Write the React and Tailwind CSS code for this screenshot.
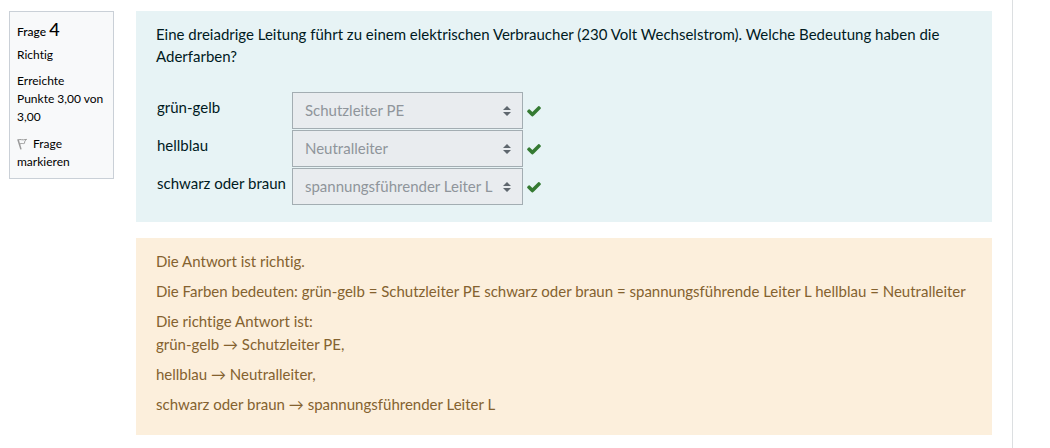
import { useState } from "react"

const rows = [
    { id: "gruen-gelb", label: "grün-gelb", answer: "Schutzleiter PE" },
    { id: "hellblau", label: "hellblau", answer: "Neutralleiter" },
    { id: "schwarz-braun", label: "schwarz oder braun", answer: "spannungsführender Leiter L" },
]

function CheckIcon() {
    return (
        <svg viewBox="0 0 1792 1792" className="h-4 w-4 fill-[#357a32]" role="img" aria-label="Richtig">
            <path d="M1671 566q0 40-28 68l-724 724-136 136q-28 28-68 28t-68-28l-136-136-362-362q-28-28-28-68t28-68l136-136q28-28 68-28t68 28l294 295 656-657q28-28 68-28t68 28l136 136q28 28 28 68z" />
        </svg>
    )
}

function FlagIcon() {
    return (
        <svg viewBox="0 0 12 12" className="mr-px inline-block h-3 w-3 align-[-2px]" fill="none" stroke="#999" aria-hidden="true">
            <path d="M0.9 1.2L4 11.4" strokeWidth="1.5" />
            <path d="M1.5 1.9C3.5 0.8 5 2.6 9.6 1.4C8.2 2.8 7.2 3.6 7.6 5.2C6 6.2 5 4.8 2.8 6" strokeWidth="1" />
        </svg>
    )
}

function AnswerRow({ row }) {
    return (
        <>
            <label htmlFor={row.id} className="pt-1">{row.label}</label>
            <div className="flex items-center gap-[3px]">
                <div className="relative">
                    <select
                        id={row.id}
                        disabled
                        defaultValue={row.answer}
                        className="block h-[37px] w-[231px] appearance-none border border-[#a3adb2] bg-[#e9ecef] pr-6 pb-[2px] pl-3 text-[15px] text-[#8f959b] opacity-100"
                    >
                        {rows.map((option) => (
                            <option key={option.id}>{option.answer}</option>
                        ))}
                    </select>
                    <svg viewBox="0 0 4 5" className="pointer-events-none absolute inset-y-0 right-3 my-auto h-[10px] w-2 fill-[#5f676e]" aria-hidden="true">
                        <path d="M2 0L0 2h4zm0 5L0 3h4z" />
                    </svg>
                </div>
                <CheckIcon />
            </div>
        </>
    )
}

function QuestionInfo({ flagged, onToggle }) {
    return (
        <aside className="w-[105px] shrink-0 border border-[#cad0d7] bg-[#f8f9fa] p-[7px] text-xs leading-[18px] text-black">
            <h3 className="font-medium leading-5">
                Frage <span className="text-lg leading-5">4</span>
            </h3>
            <div className="mt-1">Richtig</div>
            <div className="mt-2">
                Erreichte
                <br />
                Punkte 3,00 von 3,00
            </div>
            <button type="button" aria-pressed={flagged} onClick={onToggle} className="mt-[9px] block text-left">
                <FlagIcon /> Frage markieren
            </button>
        </aside>
    )
}

export default function App() {
    const [flagged, setFlagged] = useState(false)

    return (
        <div className="flex min-h-screen bg-white font-['Lato',sans-serif] text-[15px] leading-[22px] [font-variant-ligatures:none]">
            <main className="flex grow items-start gap-[22px] border-r border-[#dcdfe1] pt-[11px] pr-5 pl-[9px]">
                <QuestionInfo flagged={flagged} onToggle={() => setFlagged(!flagged)} />

                <div className="flex min-w-0 grow flex-col gap-4">
                    <section className="bg-[#e7f3f5] px-5 pt-3 pb-[17px] text-[#001a1e]">
                        <p>
                            Eine dreiadrige Leitung führt zu einem elektrischen Verbraucher (230 Volt Wechselstrom). Welche Bedeutung haben die Aderfarben?
                        </p>
                        <div className="mt-[25px] grid grid-cols-[auto_1fr] gap-x-[6px] gap-y-px pl-px">
                            {rows.map((row) => (
                                <AnswerRow key={row.id} row={row} />
                            ))}
                        </div>
                    </section>

                    <section className="flex flex-col gap-[7px] bg-[#fcefdc] px-5 pt-3 pb-[19px] leading-[23px] text-[#84622f]">
                        <p>Die Antwort ist richtig.</p>
                        <p>Die Farben bedeuten: grün-gelb = Schutzleiter PE schwarz oder braun = spannungsführende Leiter L hellblau = Neutralleiter</p>
                        <p>
                            Die richtige Antwort ist:
                            <br />
                            grün-gelb → Schutzleiter PE,
                        </p>
                        <p>hellblau → Neutralleiter,</p>
                        <p>schwarz oder braun → spannungsführender Leiter L</p>
                    </section>
                </div>
            </main>
            <div className="w-[37px] shrink-0" />
        </div>
    )
}
